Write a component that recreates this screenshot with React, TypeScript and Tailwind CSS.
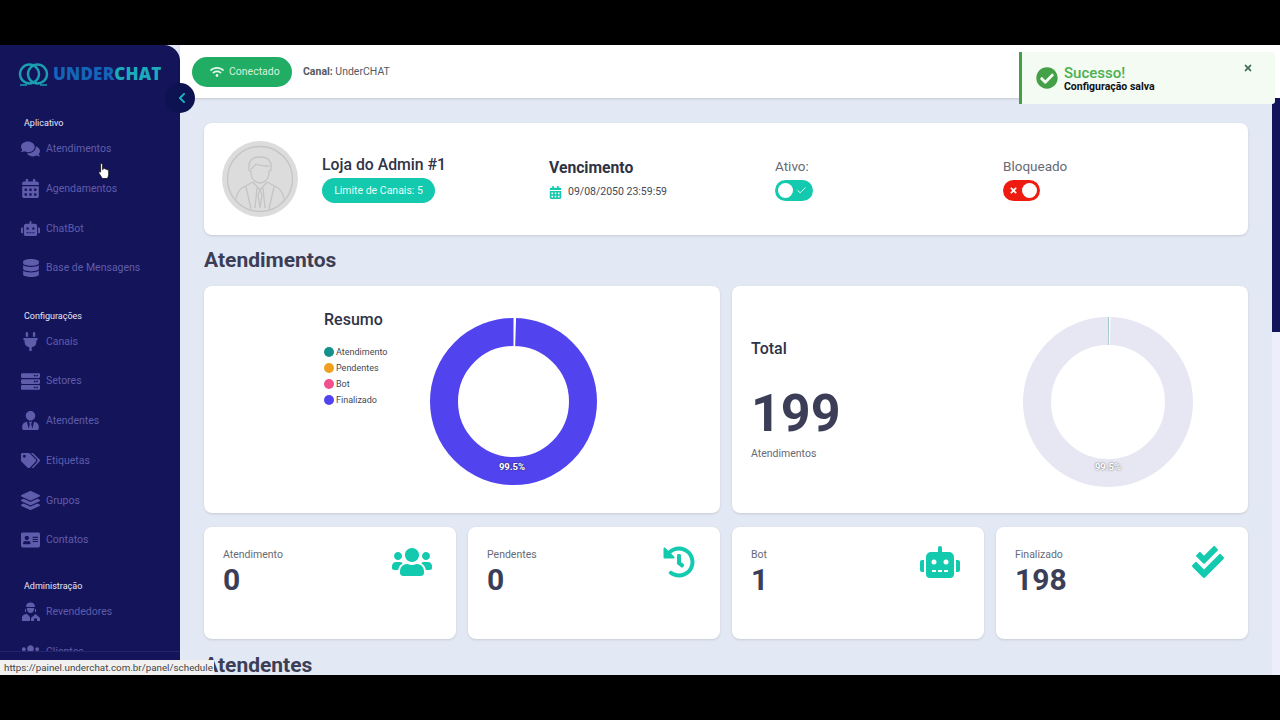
import type { ReactNode } from 'react'
import { Check } from 'lucide-react'
import {
  FaAddressCard,
  FaCalendarAlt,
  FaCheckCircle,
  FaCheckDouble,
  FaChevronLeft,
  FaComments,
  FaDatabase,
  FaHistory,
  FaLayerGroup,
  FaPlug,
  FaRobot,
  FaServer,
  FaTags,
  FaTimes,
  FaUsers,
  FaUserTie,
  FaWifi,
} from 'react-icons/fa'

type NavItem = { label: string; icon: ReactNode }

function ResellerIcon() {
  return (
    <svg width="19" height="20" viewBox="0 0 19 20" fill="currentColor">
      <path d="M5 4.5C5 2 7 .6 9.5.6S14 2 14 4.5l-1 .5H6z" />
      <path d="M5.8 6h7.4c0 3-1.500 5-3.700 5S5.800 9 5.800 6z" />
      <path d="M4 7h1v3H4zM14 7h1v3h-1z" />
      <path d="M1 19v-3.500C1 13.500 3.500 12 6 12l3 3v4z" />
      <path d="M10 19v-3l4.500-4 4.500 4v3h-3v-2.500h-3V19z" />
    </svg>
  )
}

const appItems: NavItem[] = [
  { label: 'Atendimentos', icon: <FaComments className="text-[20px]" /> },
  { label: 'Agendamentos', icon: <FaCalendarAlt className="text-[19px]" /> },
  { label: 'ChatBot', icon: <FaRobot className="text-[19px]" /> },
  { label: 'Base de Mensagens', icon: <FaDatabase className="text-[18px]" /> },
]

const configItems: NavItem[] = [
  { label: 'Canais', icon: <FaPlug className="text-[19px]" /> },
  { label: 'Setores', icon: <FaServer className="text-[19px]" /> },
  { label: 'Atendentes', icon: <FaUserTie className="text-[19px]" /> },
  { label: 'Etiquetas', icon: <FaTags className="text-[19px]" /> },
  { label: 'Grupos', icon: <FaLayerGroup className="text-[19px]" /> },
  { label: 'Contatos', icon: <FaAddressCard className="text-[20px]" /> },
]

const adminItems: NavItem[] = [
  { label: 'Revendedores', icon: <ResellerIcon /> },
  { label: 'Clientes', icon: <FaUsers className="text-[20px]" /> },
]

const stats = [
  { label: 'Atendimento', value: '0', icon: <FaUsers className="-mt-[3px] text-[40px]" /> },
  { label: 'Pendentes', value: '0', icon: <FaHistory className="mr-[1px] mt-[1px] text-[32px]" /> },
  { label: 'Bot', value: '1', icon: <FaRobot className="-mt-[3px] text-[40px]" /> },
  { label: 'Finalizado', value: '198', icon: <FaCheckDouble className="mt-[1px] text-[32px]" /> },
]

const legend = [
  { name: 'Atendimento', dot: 'bg-[#14918a]' },
  { name: 'Pendentes', dot: 'bg-[#f0a020]' },
  { name: 'Bot', dot: 'bg-[#f0508c]' },
  { name: 'Finalizado', dot: 'bg-[#5144ef]' },
]

function NavSection({ title, items, className }: { title: string; items: NavItem[]; className: string }) {
  return (
    <div className={className}>
      <div className="pl-6 text-[9px] leading-[14px] text-[#e6e6f5]">{title}</div>
      <ul className="-mt-[1px]">
        {items.map((item) => (
          <li key={item.label} className="flex h-[39.75px] items-center pl-[21px] text-[#5f5dab]">
            <span className="flex w-[19px] justify-center">{item.icon}</span>
            <span className="ml-[6px] text-[10.5px]">{item.label}</span>
          </li>
        ))}
      </ul>
    </div>
  )
}

function Logo() {
  return (
    <div className="flex items-center pl-[18px]">
      <svg width="31" height="24" viewBox="0 0 31 24" fill="none">
        <circle cx="11.5" cy="12" r="9.5" stroke="#1b9fb0" strokeWidth="2.4" />
        <circle cx="19.5" cy="12" r="9.5" stroke="#1b9fb0" strokeWidth="2.4" />
        <path d="M2 23h7M22 23h7" stroke="#1b9fb0" strokeWidth="1.6" />
      </svg>
      <span className="ml-[4px] font-['Open_Sans',sans-serif] text-[17px] font-extrabold tracking-[0.2px]">
        <span className="text-[#1464b8]">UNDER</span>
        <span className="text-[#1cabbd]">CHAT</span>
      </span>
    </div>
  )
}

function Sidebar() {
  return (
    <aside className="flex w-[180px] shrink-0 flex-col overflow-hidden rounded-tr-[16px] bg-[#14145a]">
      <div className="flex h-[57px] shrink-0 items-center pt-[1px]">
        <Logo />
      </div>
      <div className="min-h-0 flex-1 overflow-hidden">
        <NavSection title="Aplicativo" items={appItems} className="pt-[14px]" />
        <NavSection title="Configurações" items={configItems} className="pt-[20.5px]" />
        <NavSection title="Administração" items={adminItems} className="pt-[19px]" />
      </div>
      <div className="h-[24px] shrink-0 border-t border-[#25256c]" />
    </aside>
  )
}

function Switch({ on }: { on: boolean }) {
  return (
    <div
      className={
        on
          ? 'flex h-[21px] w-[38px] items-center justify-between rounded-full bg-[#13c9ae] pl-[3px] pr-[6px]'
          : 'flex h-[21px] w-[37px] items-center justify-between rounded-full bg-[#ee1c10] pl-[6px] pr-[3px]'
      }
    >
      {on ? (
        <>
          <span className="h-[15px] w-[15px] rounded-full bg-white" />
          <Check size={11} strokeWidth={2} className="text-white" />
        </>
      ) : (
        <>
          <FaTimes className="text-[9px] text-white" />
          <span className="h-[15px] w-[15px] rounded-full bg-white" />
        </>
      )}
    </div>
  )
}

function Avatar() {
  return (
    <div className="flex h-[76px] w-[76px] shrink-0 items-center justify-center rounded-full bg-[#dcdcdc]">
      <svg width="76" height="76" viewBox="0 0 76 76" fill="none" stroke="#c4c4c4" strokeWidth="1.3">
        <circle cx="38" cy="38" r="32.5" />
        <path d="M27 28c-1-8 3-12 11-12s12 4 11 12c0 1-1 2-2 2v3c-1 6-5 9-9 9s-8-3-9-9v-3c-1 0-2-1-2-2z" />
        <path d="M29 28c2-2 4-3 5-5 4 2 9 2 13 2" />
        <path d="M31 41l-11 6c-3 2-5 5-6 11M45 41l11 6c3 2 5 5 6 11" />
        <path d="M31 41l7 8 7-8M35 47l-2 20M41 47l2 20M38 49l-2 5 2 13 2-13z" />
        <path d="M24 46l5 22M52 46l-5 22" />
      </svg>
    </div>
  )
}

function Donut({
  size,
  color,
  tick,
  className,
  labelClass,
}: {
  size: number
  color: string
  tick?: string
  className: string
  labelClass: string
}) {
  // anel com a fatia de 0,5% no topo
  const center = size / 2
  const radius = center - 14
  const circ = 2 * Math.PI * radius
  return (
    <div className={`relative shrink-0 ${className}`} style={{ width: size, height: size }}>
      <svg width={size} height={size} viewBox={`0 0 ${size} ${size}`} fill="none">
        <circle cx={center} cy={center} r={radius} stroke={color} strokeWidth="28" />
        <circle
          cx={center}
          cy={center}
          r={radius}
          stroke="#ffffff"
          strokeWidth="28"
          strokeDasharray={`${circ * 0.005} ${circ}`}
          transform={`rotate(-90 ${center} ${center})`}
        />
        {tick && (
          <circle
            cx={center}
            cy={center}
            r={radius}
            stroke={tick}
            strokeWidth="28"
            strokeDasharray={`${circ * 0.0012} ${circ}`}
            transform={`rotate(-90 ${center} ${center})`}
          />
        )}
      </svg>
      <span className={labelClass}>99.5%</span>
    </div>
  )
}

function StatCard({ label, value, icon }: { label: string; value: string; icon: ReactNode }) {
  return (
    <div className="flex h-[112px] items-start justify-between rounded-lg bg-white pl-[19px] pr-[24px] pt-[21px] shadow-sm">
      <div>
        <div className="text-[10.5px] leading-[14px] text-[#666a75]">{label}</div>
        <div className="text-[30px] font-bold leading-[36px] text-[#3b3e56]">{value}</div>
      </div>
      <div className="-mt-[3px] text-[#13c9ae]">{icon}</div>
    </div>
  )
}

function Toast() {
  return (
    <div className="absolute right-[5px] top-[52px] flex h-[52px] w-[256px] items-start rounded-r-[3px] border-l-[3px] border-[#43a047] bg-[#f3fbf3] pl-[14px] pt-[14px]">
      <FaCheckCircle className="mt-[1px] text-[22px] text-[#43a047]" />
      <div className="ml-[6px]">
        <div className="text-[15px] font-medium leading-[15px] text-[#4caf50]">Sucesso!</div>
        <div className="text-[10.5px] font-bold leading-[12px] text-[#111111]">Configuração salva</div>
      </div>
      <FaTimes className="absolute right-[22px] top-[11px] text-[10px] text-[#47705a]" />
    </div>
  )
}

function Cursor() {
  return (
    <svg className="absolute left-[98px] top-[162px]" width="12" height="18" viewBox="0 0 12 18">
      <path
        d="M3.2 1.5c.9 0 1.4.6 1.4 1.500v4.600l.5-.2V6.500c1-.6 1.800-.2 2 .6 1-.4 1.700 0 1.900.8 1-.3 1.700.2 1.700 1.200v3.700c0 1.600-.9 2.700-1.400 3.700H4.300L1 11.300c-.6-1 .3-2 1.600-1.200V3c0-.9 0-1.500.6-1.500z"
        fill="#ffffff"
        stroke="#111111"
        strokeWidth="0.8"
      />
    </svg>
  )
}

export default function App() {
  return (
    <div className="relative flex h-[720px] w-[1280px] flex-col overflow-hidden bg-black font-['Roboto',sans-serif]">
      <div className="h-[45px] shrink-0 bg-black" />
      <div className="flex h-[630px] shrink-0 bg-[#e3e9f4]">
        <Sidebar />
        <div className="flex min-w-0 flex-1 flex-col">
          <header className="flex h-[53px] shrink-0 items-center bg-white pl-[12px] shadow-sm">
            <div className="flex h-[30px] w-[100px] items-center rounded-full bg-[#21ad63] pl-[18px]">
              <FaWifi className="text-[14px] text-[#e4f6ea]" />
              <span className="ml-[5px] text-[10.5px] text-[#d5f2de]">Conectado</span>
            </div>
            <div className="ml-[11px] text-[10.5px] text-[#55595f]">
              <span className="font-bold">Canal:</span> UnderCHAT
            </div>
          </header>
          <div className="flex min-h-0 flex-1">
            <main className="min-w-0 flex-1 overflow-hidden px-6 pt-[25px]">
              <section className="flex h-[112px] items-center rounded-lg bg-white pl-[18px] shadow-sm">
                <Avatar />
                <div className="ml-[24px] w-[227px]">
                  <div className="text-[15.8px] font-medium leading-[20px] text-[#2f3346]">Loja do Admin #1</div>
                  <div className="mt-[3px] flex h-[25px] w-[113px] items-center justify-center rounded-full bg-[#13c9ae] text-[10.5px] text-[#e8fbf7]">
                    Limite de Canais: 5
                  </div>
                </div>
                <div className="w-[226px]">
                  <div className="text-[15.7px] font-bold leading-[20px] text-[#2f3346]">Vencimento</div>
                  <div className="mt-[6px] flex items-center text-[10.5px] text-[#444852]">
                    <FaCalendarAlt className="text-[13px] text-[#13c9ae]" />
                    <span className="ml-[6px]">09/08/2050 23:59:59</span>
                  </div>
                </div>
                <div className="w-[228px]">
                  <div className="text-[13.5px] leading-[18px] text-[#666a75]">Ativo:</div>
                  <div className="mt-[5px]">
                    <Switch on />
                  </div>
                </div>
                <div>
                  <div className="text-[13.5px] leading-[18px] text-[#666a75]">Bloqueado</div>
                  <div className="mt-[5px]">
                    <Switch on={false} />
                  </div>
                </div>
              </section>

              <h2 className="mt-[11px] text-[21px] font-bold leading-[28px] text-[#3b3e56]">Atendimentos</h2>

              <div className="mt-[12px] grid grid-cols-2 gap-3">
                <div className="flex h-[227px] items-center rounded-lg bg-white pl-[120px] shadow-sm">
                  <div className="h-[167px] w-[106px]">
                    <div className="-mt-[5px] text-[16px] font-medium leading-[18px] text-[#2f3346]">Resumo</div>
                    <ul className="mt-[16px] text-[9px] text-[#444852]">
                      {legend.map((item) => (
                        <li key={item.name} className="flex h-[16px] items-center">
                          <span className={`mb-[3px] h-[10px] w-[10px] rounded-full ${item.dot}`} />
                          <span className="ml-[2px]">{item.name}</span>
                        </li>
                      ))}
                    </ul>
                  </div>
                  <Donut
                    size={167}
                    color="#5144ef"
                    className="mt-[3px]"
                    labelClass="absolute bottom-[10px] left-0 w-full pr-[3px] text-center text-[9.5px] font-bold text-white [text-shadow:0_0_2px_#222222]"
                  />
                </div>
                <div className="flex h-[227px] items-center justify-between rounded-lg bg-white pl-[19px] pr-[55px] shadow-sm">
                  <div>
                    <div className="text-[16px] font-medium leading-[20px] text-[#2f3346]">Total</div>
                    <div className="mt-[26px] text-[52px] font-bold leading-[58px] text-[#3b3e56]">199</div>
                    <div className="mt-[4px] text-[10.5px] leading-[14px] text-[#666a75]">Atendimentos</div>
                  </div>
                  <Donut
                    size={170}
                    color="#e7e7f3"
                    tick="#4f9aa3"
                    className="mt-[4px]"
                    labelClass="absolute bottom-[12px] left-0 w-full text-center text-[9.5px] font-bold text-white [text-shadow:0_0_2px_#555555]"
                  />
                </div>
              </div>

              <div className="mt-[14px] grid grid-cols-4 gap-3">
                {stats.map((stat) => (
                  <StatCard key={stat.label} {...stat} />
                ))}
              </div>

              <h2 className="mt-[12px] text-[21px] font-bold leading-[28px] text-[#3b3e56]">Atendentes</h2>
            </main>
            <div className="w-[8px] shrink-0 bg-[#eceefc]">
              <div className="h-[234px] bg-[#14145a]" />
            </div>
          </div>
        </div>
      </div>
      <div className="h-[45px] shrink-0 bg-black" />

      <div className="absolute left-[165px] top-[83px] flex h-[30px] w-[30px] items-center justify-end rounded-full bg-[#0d1250] pr-[7px]">
        <FaChevronLeft className="text-[12px] text-[#14b8c8]" />
      </div>
      <Toast />
      <Cursor />
      <div className="absolute left-0 top-[660px] h-[15px] w-[214px] overflow-hidden whitespace-nowrap bg-[#f1f1f1] pl-[4px] text-[9.8px] leading-[15px] text-[#444444]">
        https://painel.underchat.com.br/panel/schedule
      </div>
    </div>
  )
}
